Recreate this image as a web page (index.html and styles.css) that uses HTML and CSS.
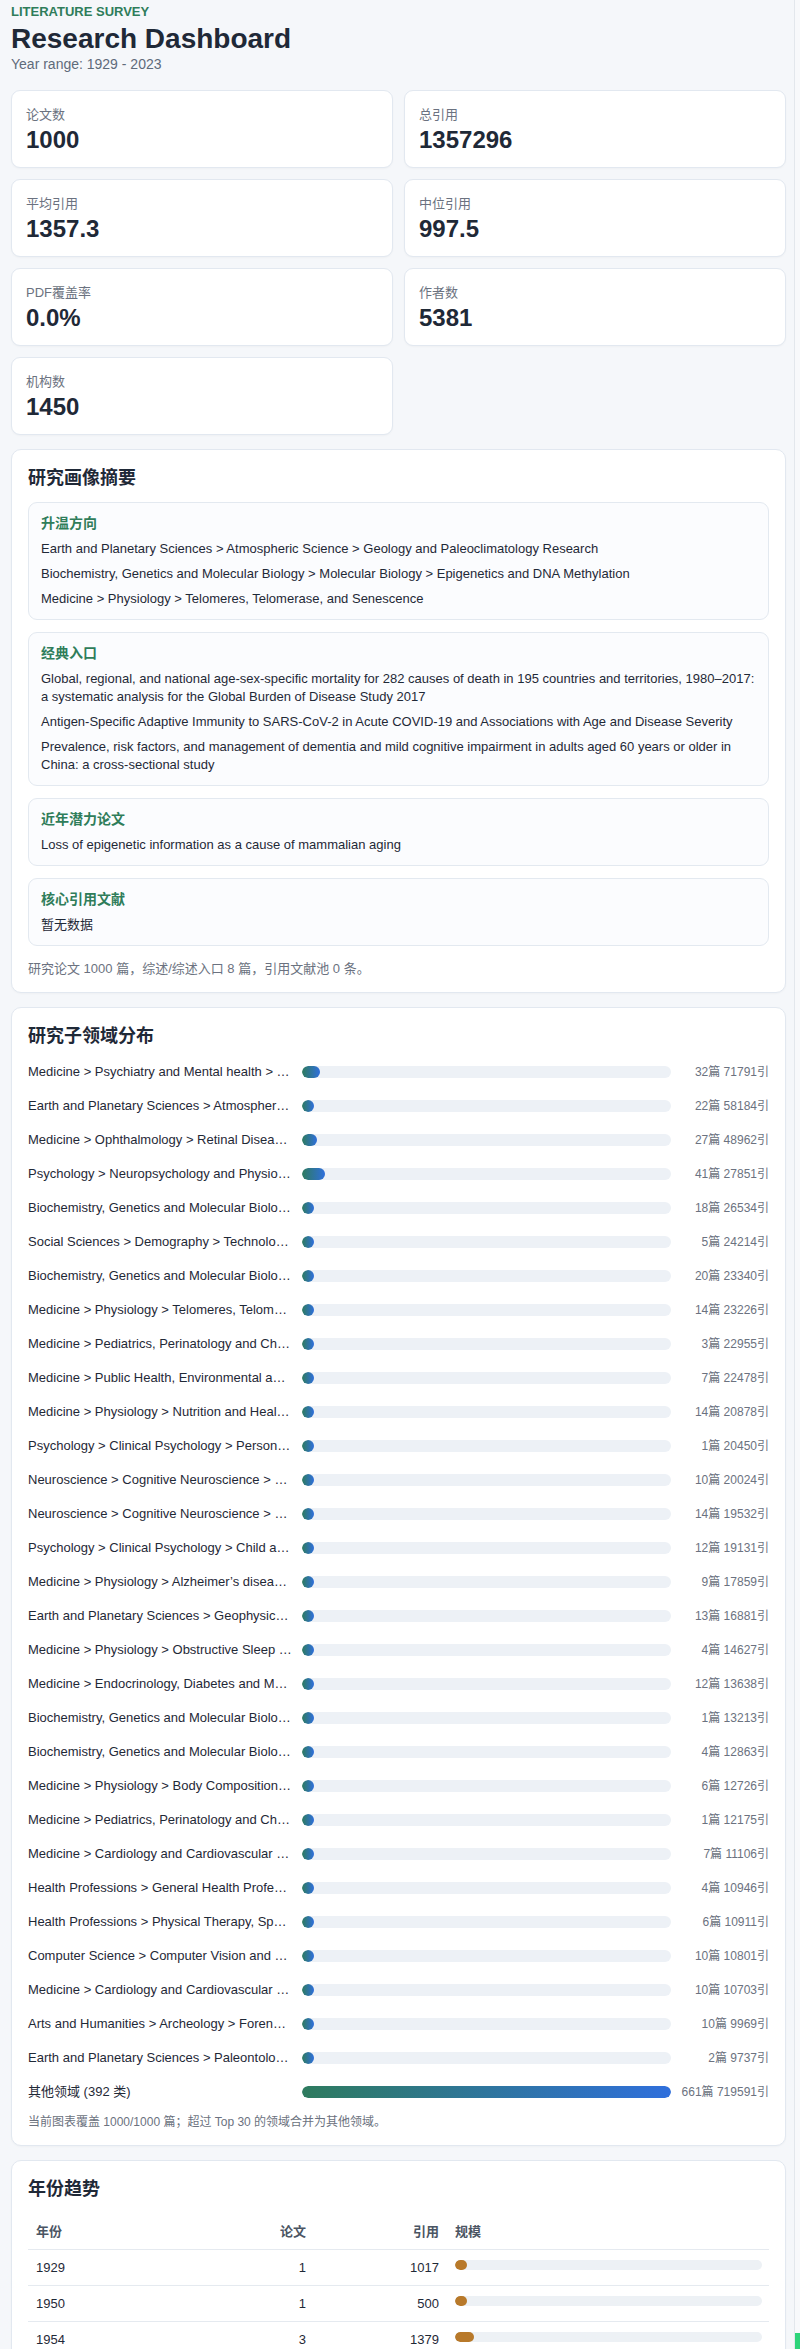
FILE: index.html
```html
<!DOCTYPE html>
<html lang="zh-CN">
<head>
<meta charset="utf-8">
<title>Research Dashboard</title>
<link rel="stylesheet" href="styles.css">
</head>
<body>
<div class="page">
  <header class="hero">
    <div class="eyebrow">LITERATURE SURVEY</div>
    <h1 class="title">Research Dashboard</h1>
    <div class="subtitle">Year range: 1929 - 2023</div>
  </header>

  <div class="stats">
    <div class="stat"><div class="stat-label">论文数</div><div class="stat-value">1000</div></div>
    <div class="stat"><div class="stat-label">总引用</div><div class="stat-value">1357296</div></div>
    <div class="stat"><div class="stat-label">平均引用</div><div class="stat-value">1357.3</div></div>
    <div class="stat"><div class="stat-label">中位引用</div><div class="stat-value">997.5</div></div>
    <div class="stat"><div class="stat-label">PDF覆盖率</div><div class="stat-value">0.0%</div></div>
    <div class="stat"><div class="stat-label">作者数</div><div class="stat-value">5381</div></div>
    <div class="stat"><div class="stat-label">机构数</div><div class="stat-value">1450</div></div>
  </div>

  <section class="panel">
    <h2 class="panel-title">研究画像摘要</h2>
    <div class="boxes">
      <div class="box">
        <div class="box-title">升温方向</div>
        <div class="box-item">Earth and Planetary Sciences &gt; Atmospheric Science &gt; Geology and Paleoclimatology Research</div>
        <div class="box-item">Biochemistry, Genetics and Molecular Biology &gt; Molecular Biology &gt; Epigenetics and DNA Methylation</div>
        <div class="box-item">Medicine &gt; Physiology &gt; Telomeres, Telomerase, and Senescence</div>
      </div>
      <div class="box">
        <div class="box-title">经典入口</div>
        <div class="box-item">Global, regional, and national age-sex-specific mortality for 282 causes of death in 195 countries and territories, 1980–2017: a systematic analysis for the Global Burden of Disease Study 2017</div>
        <div class="box-item">Antigen-Specific Adaptive Immunity to SARS-CoV-2 in Acute COVID-19 and Associations with Age and Disease Severity</div>
        <div class="box-item">Prevalence, risk factors, and management of dementia and mild cognitive impairment in adults aged 60 years or older in China: a cross-sectional study</div>
      </div>
      <div class="box">
        <div class="box-title">近年潜力论文</div>
        <div class="box-item">Loss of epigenetic information as a cause of mammalian aging</div>
      </div>
      <div class="box">
        <div class="box-title">核心引用文献</div>
        <div class="box-item">暂无数据</div>
      </div>
    </div>
    <p class="note note-lg">研究论文 1000 篇，综述/综述入口 8 篇，引用文献池 0 条。</p>
  </section>

  <section class="panel">
    <h2 class="panel-title">研究子领域分布</h2>
    <div class="fields">
      <div class="field"><div class="field-label">Medicine &gt; Psychiatry and Mental health &gt; …</div><div class="track"><div class="fill" style="width:4.84%"></div></div><div class="field-count">32篇 71791引</div></div>
      <div class="field"><div class="field-label">Earth and Planetary Sciences &gt; Atmospher…</div><div class="track"><div class="fill" style="width:3.33%"></div></div><div class="field-count">22篇 58184引</div></div>
      <div class="field"><div class="field-label">Medicine &gt; Ophthalmology &gt; Retinal Disea…</div><div class="track"><div class="fill" style="width:4.08%"></div></div><div class="field-count">27篇 48962引</div></div>
      <div class="field"><div class="field-label">Psychology &gt; Neuropsychology and Physio…</div><div class="track"><div class="fill" style="width:6.2%"></div></div><div class="field-count">41篇 27851引</div></div>
      <div class="field"><div class="field-label">Biochemistry, Genetics and Molecular Biolo…</div><div class="track"><div class="fill" style="width:2.72%"></div></div><div class="field-count">18篇 26534引</div></div>
      <div class="field"><div class="field-label">Social Sciences &gt; Demography &gt; Technolo…</div><div class="track"><div class="fill" style="width:0.76%"></div></div><div class="field-count">5篇 24214引</div></div>
      <div class="field"><div class="field-label">Biochemistry, Genetics and Molecular Biolo…</div><div class="track"><div class="fill" style="width:3.03%"></div></div><div class="field-count">20篇 23340引</div></div>
      <div class="field"><div class="field-label">Medicine &gt; Physiology &gt; Telomeres, Telom…</div><div class="track"><div class="fill" style="width:2.12%"></div></div><div class="field-count">14篇 23226引</div></div>
      <div class="field"><div class="field-label">Medicine &gt; Pediatrics, Perinatology and Ch…</div><div class="track"><div class="fill" style="width:0.45%"></div></div><div class="field-count">3篇 22955引</div></div>
      <div class="field"><div class="field-label">Medicine &gt; Public Health, Environmental a…</div><div class="track"><div class="fill" style="width:1.06%"></div></div><div class="field-count">7篇 22478引</div></div>
      <div class="field"><div class="field-label">Medicine &gt; Physiology &gt; Nutrition and Heal…</div><div class="track"><div class="fill" style="width:2.12%"></div></div><div class="field-count">14篇 20878引</div></div>
      <div class="field"><div class="field-label">Psychology &gt; Clinical Psychology &gt; Person…</div><div class="track"><div class="fill" style="width:0.15%"></div></div><div class="field-count">1篇 20450引</div></div>
      <div class="field"><div class="field-label">Neuroscience &gt; Cognitive Neuroscience &gt; …</div><div class="track"><div class="fill" style="width:1.51%"></div></div><div class="field-count">10篇 20024引</div></div>
      <div class="field"><div class="field-label">Neuroscience &gt; Cognitive Neuroscience &gt; …</div><div class="track"><div class="fill" style="width:2.12%"></div></div><div class="field-count">14篇 19532引</div></div>
      <div class="field"><div class="field-label">Psychology &gt; Clinical Psychology &gt; Child a…</div><div class="track"><div class="fill" style="width:1.82%"></div></div><div class="field-count">12篇 19131引</div></div>
      <div class="field"><div class="field-label">Medicine &gt; Physiology &gt; Alzheimer’s disea…</div><div class="track"><div class="fill" style="width:1.36%"></div></div><div class="field-count">9篇 17859引</div></div>
      <div class="field"><div class="field-label">Earth and Planetary Sciences &gt; Geophysic…</div><div class="track"><div class="fill" style="width:1.97%"></div></div><div class="field-count">13篇 16881引</div></div>
      <div class="field"><div class="field-label">Medicine &gt; Physiology &gt; Obstructive Sleep …</div><div class="track"><div class="fill" style="width:0.61%"></div></div><div class="field-count">4篇 14627引</div></div>
      <div class="field"><div class="field-label">Medicine &gt; Endocrinology, Diabetes and M…</div><div class="track"><div class="fill" style="width:1.82%"></div></div><div class="field-count">12篇 13638引</div></div>
      <div class="field"><div class="field-label">Biochemistry, Genetics and Molecular Biolo…</div><div class="track"><div class="fill" style="width:0.15%"></div></div><div class="field-count">1篇 13213引</div></div>
      <div class="field"><div class="field-label">Biochemistry, Genetics and Molecular Biolo…</div><div class="track"><div class="fill" style="width:0.61%"></div></div><div class="field-count">4篇 12863引</div></div>
      <div class="field"><div class="field-label">Medicine &gt; Physiology &gt; Body Composition…</div><div class="track"><div class="fill" style="width:0.91%"></div></div><div class="field-count">6篇 12726引</div></div>
      <div class="field"><div class="field-label">Medicine &gt; Pediatrics, Perinatology and Ch…</div><div class="track"><div class="fill" style="width:0.15%"></div></div><div class="field-count">1篇 12175引</div></div>
      <div class="field"><div class="field-label">Medicine &gt; Cardiology and Cardiovascular …</div><div class="track"><div class="fill" style="width:1.06%"></div></div><div class="field-count">7篇 11106引</div></div>
      <div class="field"><div class="field-label">Health Professions &gt; General Health Profe…</div><div class="track"><div class="fill" style="width:0.61%"></div></div><div class="field-count">4篇 10946引</div></div>
      <div class="field"><div class="field-label">Health Professions &gt; Physical Therapy, Sp…</div><div class="track"><div class="fill" style="width:0.91%"></div></div><div class="field-count">6篇 10911引</div></div>
      <div class="field"><div class="field-label">Computer Science &gt; Computer Vision and …</div><div class="track"><div class="fill" style="width:1.51%"></div></div><div class="field-count">10篇 10801引</div></div>
      <div class="field"><div class="field-label">Medicine &gt; Cardiology and Cardiovascular …</div><div class="track"><div class="fill" style="width:1.51%"></div></div><div class="field-count">10篇 10703引</div></div>
      <div class="field"><div class="field-label">Arts and Humanities &gt; Archeology &gt; Foren…</div><div class="track"><div class="fill" style="width:1.51%"></div></div><div class="field-count">10篇 9969引</div></div>
      <div class="field"><div class="field-label">Earth and Planetary Sciences &gt; Paleontolo…</div><div class="track"><div class="fill" style="width:0.3%"></div></div><div class="field-count">2篇 9737引</div></div>
      <div class="field"><div class="field-label">其他领域 (392 类)</div><div class="track"><div class="fill" style="width:100%"></div></div><div class="field-count">661篇 719591引</div></div>
    </div>
    <p class="note">当前图表覆盖 1000/1000 篇；超过 Top 30 的领域合并为其他领域。</p>
  </section>

  <section class="panel">
    <h2 class="panel-title">年份趋势</h2>
    <table class="years">
      <thead>
        <tr><th class="c-year">年份</th><th class="c-num">论文</th><th class="c-num c-cite">引用</th><th class="c-scale">规模</th></tr>
      </thead>
      <tbody>
        <tr><td class="c-year">1929</td><td class="c-num">1</td><td class="c-num">1017</td><td class="c-scale"><div class="ytrack"><div class="yfill" style="width:2.07%"></div></div></td></tr>
        <tr><td class="c-year">1950</td><td class="c-num">1</td><td class="c-num">500</td><td class="c-scale"><div class="ytrack"><div class="yfill" style="width:2.07%"></div></div></td></tr>
        <tr><td class="c-year">1954</td><td class="c-num">3</td><td class="c-num">1379</td><td class="c-scale"><div class="ytrack"><div class="yfill" style="width:6.2%"></div></div></td></tr>
      </tbody>
    </table>
  </section>
</div>
<div class="scrollbar"><div class="scrollbar-thumb"></div></div>
</body>
</html>
```

FILE: styles.css
```css
* { box-sizing: border-box; }

html, body {
  margin: 0;
  padding: 0;
  background: #f5f7fa;
}

body {
  font-family: "Liberation Sans", Arial, "Noto Sans CJK SC", sans-serif;
  color: #1f2937;
}

.page {
  width: 775px;
  margin-left: 11px;
  padding-top: 4px;
}

.hero { margin-bottom: 17px; }

.eyebrow {
  font-size: 13px;
  line-height: 16px;
  font-weight: 700;
  color: #2f7d5a;
}

.title {
  margin: 3px 0 0;
  font-size: 28px;
  line-height: 32px;
  font-weight: 700;
  color: #1f2937;
}

.subtitle {
  font-size: 14px;
  line-height: 18px;
  color: #5f6b7a;
}

.stats {
  display: grid;
  grid-template-columns: 1fr 1fr;
  gap: 11px;
  margin-bottom: 14px;
}

.stat {
  background: #fff;
  border: 1px solid #e2e8f0;
  border-radius: 9px;
  padding: 15px 14px 13px;
  box-shadow: 0 1px 2px rgba(15, 23, 42, 0.03);
}

.stat-label {
  font-size: 13px;
  line-height: 18px;
  color: #6b7280;
  margin-bottom: 2px;
}

.stat-value {
  font-size: 24px;
  line-height: 28px;
  font-weight: 700;
  color: #1f2937;
}

.panel {
  background: #fff;
  border: 1px solid #e2e8f0;
  border-radius: 10px;
  padding: 16px 16px 14px;
  margin-bottom: 14px;
  box-shadow: 0 1px 2px rgba(15, 23, 42, 0.03);
}

.panel-title {
  margin: 0 0 12px;
  font-size: 18px;
  line-height: 24px;
  font-weight: 700;
  color: #1f2937;
}

.boxes {
  display: flex;
  flex-direction: column;
  gap: 12px;
}

.box {
  background: #fbfcfe;
  border: 1px solid #e3e9f0;
  border-radius: 9px;
  padding: 11px 12px;
}

.box-title {
  font-size: 14px;
  line-height: 19px;
  font-weight: 700;
  color: #2f7d5a;
}

.box-item {
  margin-top: 7px;
  font-size: 13px;
  line-height: 18px;
  color: #1f2937;
}

.note {
  margin: 14px 0 0;
  font-size: 12px;
  line-height: 18px;
  color: #6b7280;
}

.note-lg { font-size: 13px; }

.fields {
  display: flex;
  flex-direction: column;
  gap: 14px;
  padding-top: 2px;
}

.field {
  display: grid;
  grid-template-columns: 268px 1fr 92px;
  gap: 6px;
  align-items: center;
}

.field-label {
  font-size: 13px;
  line-height: 20px;
  color: #1f2937;
  white-space: nowrap;
}

.track {
  height: 12px;
  border-radius: 6px;
  background: #edf1f6;
  overflow: hidden;
}

.fill {
  height: 100%;
  min-width: 12px;
  border-radius: 6px;
  background: linear-gradient(90deg, #2e7b5e, #2f6fdc);
}

.field-count {
  font-size: 12px;
  line-height: 20px;
  color: #6b7280;
  text-align: right;
  white-space: nowrap;
}

.fields + .note { margin-top: 11px; }

.years {
  width: 100%;
  border-collapse: collapse;
  table-layout: fixed;
  margin-top: 2px;
}

.years th,
.years td {
  padding: 0 8px;
  height: 36px;
  border-bottom: 1px solid #e5eaf0;
  font-size: 13px;
  text-align: left;
  vertical-align: middle;
}

.years th {
  font-weight: 700;
  color: #4b5563;
}

.years td { color: #1f2937; }

.years .c-year { width: 153px; }
.years .c-num { width: 133px; text-align: right; }
.years .c-scale { width: 322px; padding-right: 7px; }

.ytrack {
  height: 10px;
  border-radius: 5px;
  background: #edf1f5;
  overflow: hidden;
  margin-top: -4px;
}

.yfill {
  height: 100%;
  min-width: 12px;
  border-radius: 5px;
  background: #b8792a;
}

.scrollbar {
  position: fixed;
  top: 0;
  right: 0;
  width: 6px;
  height: 100%;
  background: #f8f9fb;
  border-left: 1px solid #e3e7ec;
}

.scrollbar-thumb {
  position: absolute;
  bottom: 0;
  left: 0;
  width: 5px;
  height: 16px;
  background: #2ed47a;
}
```
